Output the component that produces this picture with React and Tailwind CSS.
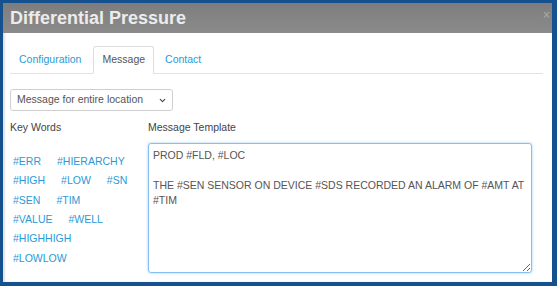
import { ChevronDown } from 'lucide-react';

const keywordRows = [
    ['#ERR', '#HIERARCHY'],
    ['#HIGH', '#LOW', '#SN'],
    ['#SEN', '#TIM'],
    ['#VALUE', '#WELL'],
    ['#HIGHHIGH'],
    ['#LOWLOW'],
];

const messageText = 'PROD #FLD, #LOC\n\nTHE #SEN SENSOR ON DEVICE #SDS RECORDED AN ALARM OF #AMT AT #TIM';

export default function App() {
    return (
        <div
            className="w-[557px] h-[286px] bg-[#15508f] pt-[3px] pl-[3px] pr-[5px] pb-[4px] box-border"
            style={{ fontFamily: '"Liberation Sans", Arial, sans-serif' }}
        >
            <div className="h-full bg-white flex flex-col overflow-hidden shadow-[inset_2px_0_2px_rgba(0,0,0,0.12)]">
                {/* Header */}
                <div className="h-[30px] shrink-0 bg-gradient-to-b from-[#7d7d7d] to-[#8b8b8b] pl-[7px] pr-[2px] flex items-center justify-between">
                    <span className="text-[18px] font-bold text-[#ececec] leading-none">Differential Pressure</span>
                    <span className="text-[12px] font-bold text-[#a0a0a0] leading-none mt-[-6px]">×</span>
                </div>

                <div className="pl-[7px] pr-[9px] pt-[13px]">
                    {/* Tabs */}
                    <div className="flex h-[28px] border-b border-[#e2e2e2] text-[10.5px]">
                        <div className="px-[9px] mr-[3px] flex items-center text-[#2a9ad6]">Configuration</div>
                        <div className="px-[8px] mr-[2px] flex items-center text-[#555] bg-white border border-[#dedede] border-b-white rounded-t-[3px] mb-[-1px]">Message</div>
                        <div className="px-[9px] flex items-center text-[#2a9ad6]">Contact</div>
                    </div>

                    {/* Select */}
                    <div className="mt-[15px] w-[163px] h-[22px] border border-[#cfcfcf] rounded-[3px] flex items-center justify-between pl-[6px] pr-[5px] text-[10.5px] text-[#555]">
                        <span>Message for entire location</span>
                        <ChevronDown size={9} strokeWidth={3} className="text-[#444]" />
                    </div>

                    {/* Columns */}
                    <div className="flex mt-[9px]">
                        <div className="w-[138px] shrink-0">
                            <div className="text-[10.5px] leading-[15px] text-[#444]">Key Words</div>
                            <div className="mt-[17px] pl-[3px]">
                                {keywordRows.map((row, i) => (
                                    <div key={i} className="flex gap-[16px] h-[19.4px] items-center text-[10.5px] text-[#2a9ad6]">
                                        {row.map(k => <span key={k}>{k}</span>)}
                                    </div>
                                ))}
                            </div>
                        </div>
                        <div className="flex-1">
                            <div className="text-[10.5px] leading-[15px] text-[#444]">Message Template</div>
                            <textarea
                                readOnly
                                defaultValue={messageText}
                                className="mt-[8px] w-[384px] h-[130px] block border border-[#86bff0] rounded-[3px] px-[4px] py-[4px] text-[10.5px] leading-[15px] text-[#555] shadow-[0_0_3px_rgba(102,175,233,0.6)] outline-none resize"
                                style={{ fontFamily: '"Liberation Sans", Arial, sans-serif' }}
                            />
                        </div>
                    </div>
                </div>
            </div>
        </div>
    );
}
